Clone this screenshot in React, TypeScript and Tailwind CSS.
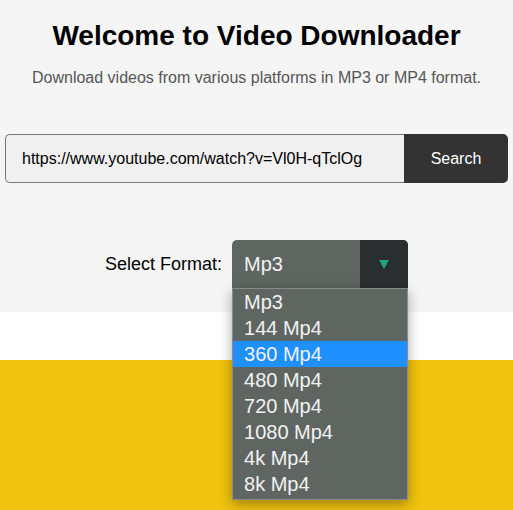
import { useState } from 'react';

const formats = ['Mp3', '144 Mp4', '360 Mp4', '480 Mp4', '720 Mp4', '1080 Mp4', '4k Mp4', '8k Mp4'];

export default function App() {
  const [url] = useState('https://www.youtube.com/watch?v=Vl0H-qTclOg');
  const highlighted = '360 Mp4';

  return (
    <div className="min-h-[510px] w-[513px] flex flex-col font-['Liberation_Sans',Arial,sans-serif]">
      {/* Main panel */}
      <div className="h-[312px] bg-[#f5f5f5] flex flex-col items-center">
        <h1 className="mt-[19px] text-[28px] leading-[34px] font-bold text-black">
          Welcome to Video Downloader
        </h1>
        <p className="mt-[16px] text-[16px] leading-[18px] text-[#555]">
          Download videos from various platforms in MP3 or MP4 format.
        </p>

        <div className="mt-[47px] w-[503px] flex h-[49px]">
          <input
            readOnly
            value={url}
            className="flex-1 min-w-0 bg-[#f0f0f0] border border-[#777] border-r-0 rounded-l-[5px] pl-[16px] text-[16px] text-black outline-none"
          />
          <button className="w-[104px] bg-[#333] text-white text-[16px] rounded-r-[5px]">
            Search
          </button>
        </div>

        <div className="mt-[57px] flex items-center gap-[10px]">
          <span className="text-[18px] text-black">Select Format:</span>
          <div className="relative w-[176px]">
            <div className="h-[48px] flex bg-[#5f6662] rounded-t-[5px] overflow-hidden">
              <span className="flex-1 flex items-center pl-[12px] text-[20px] text-[#f2f2f2]">Mp3</span>
              <span className="w-[48px] bg-[#2a2e2e] flex items-center justify-center">
                <svg width="10" height="9" viewBox="0 0 10 9">
                  <polygon points="0,0 10,0 5,9" fill="#1fa383" />
                </svg>
              </span>
            </div>
            <ul className="absolute left-0 top-[48px] w-[176px] bg-[#5f6662] border border-[#8a8a8a] shadow-[0_4px_12px_rgba(0,0,0,0.35)] pb-[2px] z-10">
              {formats.map((f) => (
                <li
                  key={f}
                  className={`h-[26px] pl-[11px] flex items-center text-[20px] leading-[24px] text-[#f2f2f2] ${
                    f === highlighted ? 'bg-[#1e90ff]' : ''
                  }`}
                >
                  {f}
                </li>
              ))}
            </ul>
          </div>
        </div>
      </div>

      <div className="h-[48px] bg-white" />
      <div className="flex-1 bg-[#f0c30f]" />
    </div>
  );
}
